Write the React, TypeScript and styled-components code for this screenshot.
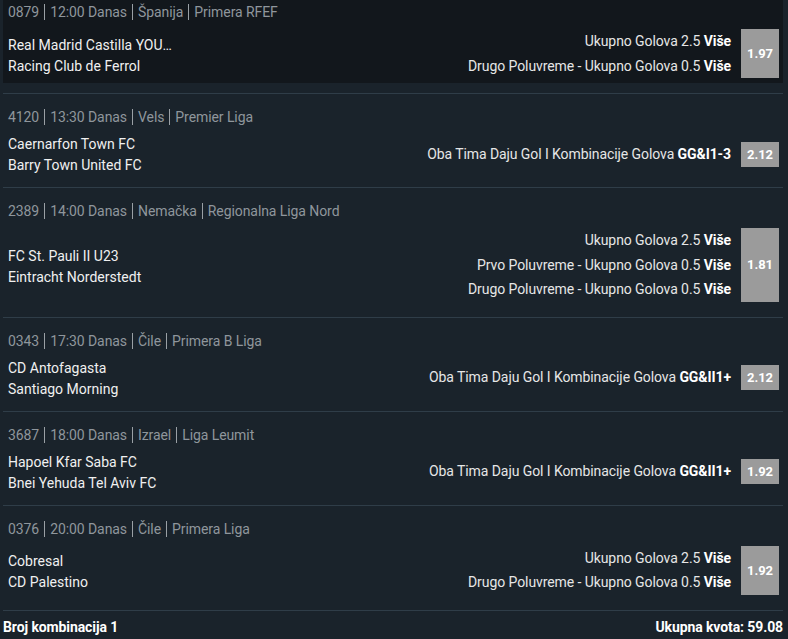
import React from "react";
import styled, { createGlobalStyle } from "styled-components";

const Global = createGlobalStyle`
  html, body { margin: 0; padding: 0; background: #1a232b; overflow: hidden; }
  body { font-family: Roboto, "Noto Sans", Arial, sans-serif; }
`;

const Page = styled.div`
  width: 788px;
  height: 639px;
  overflow: hidden;
  background: #1a232b;
`;

const List = styled.div`
  width: 780px;
  margin: -11px 0 0 3px;
  display: flex;
  flex-direction: column;
`;

const Row = styled.div<{ $active?: boolean }>`
  background: ${(p) => (p.$active ? "#12171c" : "transparent")};
  padding: 13px 4px 1px 5px;
  display: flex;
  flex-direction: column;
`;

const Divider = styled.div`
  height: 1px;
  background: #2f3d48;
  margin-top: 10px;
`;

const Meta = styled.div`
  display: flex;
  align-items: center;
  height: 20px;
  font-size: 14px;
  letter-spacing: -0.08px;
  color: #8f969c;
`;

const Sep = styled.span`
  display: inline-block;
  width: 1px;
  height: 16px;
  background: #9aa0a5;
  margin: 0 5px;
`;

const Body = styled.div`
  margin-top: 5px;
  display: flex;
  align-items: center;
  justify-content: space-between;
`;

const Teams = styled.div`
  display: flex;
  flex-direction: column;
  padding-top: 2px;
  font-size: 14px;
  line-height: 21px;
  color: #f0f0f0;
`;

const Bets = styled.div<{ $multi?: boolean }>`
  display: flex;
  align-items: center;
  gap: 10px;
  margin: ${(p) => (p.$multi ? "2px 0 4px" : "0")};
`;

const BetLines = styled.div`
  display: flex;
  flex-direction: column;
  align-items: flex-end;
  font-size: 14px;
  letter-spacing: -0.08px;
  line-height: 24.5px;
  color: #e6e6e6;
`;

const Pick = styled.b`
  font-weight: 700;
  color: #ffffff;
`;

const Odds = styled.div`
  width: 38px;
  align-self: stretch;
  min-height: 25px;
  background: #9b9b9b;
  color: #ffffff;
  font-weight: 700;
  font-size: 13px;
  display: flex;
  align-items: center;
  justify-content: center;
`;

const Footer = styled.div`
  display: flex;
  justify-content: space-between;
  padding: 8px 0 0 0;
  font-size: 14px;
  font-weight: 700;
  letter-spacing: -0.1px;
  color: #ffffff;
`;

type Bet = { label: string; pick: string };
type Match = {
  id: string;
  time: string;
  country: string;
  league: string;
  home: string;
  away: string;
  bets: Bet[];
  odds: string;
  active?: boolean;
};

const matches: Match[] = [
  {
    id: "0879",
    time: "12:00 Danas",
    country: "Španija",
    league: "Primera RFEF",
    home: "Real Madrid Castilla YOU…",
    away: "Racing Club de Ferrol",
    bets: [
      { label: "Ukupno Golova 2.5", pick: "Više" },
      { label: "Drugo Poluvreme - Ukupno Golova 0.5", pick: "Više" },
    ],
    odds: "1.97",
    active: true,
  },
  {
    id: "4120",
    time: "13:30 Danas",
    country: "Vels",
    league: "Premier Liga",
    home: "Caernarfon Town FC",
    away: "Barry Town United FC",
    bets: [{ label: "Oba Tima Daju Gol I Kombinacije Golova", pick: "GG&I1-3" }],
    odds: "2.12",
  },
  {
    id: "2389",
    time: "14:00 Danas",
    country: "Nemačka",
    league: "Regionalna Liga Nord",
    home: "FC St. Pauli II U23",
    away: "Eintracht Norderstedt",
    bets: [
      { label: "Ukupno Golova 2.5", pick: "Više" },
      { label: "Prvo Poluvreme - Ukupno Golova 0.5", pick: "Više" },
      { label: "Drugo Poluvreme - Ukupno Golova 0.5", pick: "Više" },
    ],
    odds: "1.81",
  },
  {
    id: "0343",
    time: "17:30 Danas",
    country: "Čile",
    league: "Primera B Liga",
    home: "CD Antofagasta",
    away: "Santiago Morning",
    bets: [{ label: "Oba Tima Daju Gol I Kombinacije Golova", pick: "GG&II1+" }],
    odds: "2.12",
  },
  {
    id: "3687",
    time: "18:00 Danas",
    country: "Izrael",
    league: "Liga Leumit",
    home: "Hapoel Kfar Saba FC",
    away: "Bnei Yehuda Tel Aviv FC",
    bets: [{ label: "Oba Tima Daju Gol I Kombinacije Golova", pick: "GG&II1+" }],
    odds: "1.92",
  },
  {
    id: "0376",
    time: "20:00 Danas",
    country: "Čile",
    league: "Primera Liga",
    home: "Cobresal",
    away: "CD Palestino",
    bets: [
      { label: "Ukupno Golova 2.5", pick: "Više" },
      { label: "Drugo Poluvreme - Ukupno Golova 0.5", pick: "Više" },
    ],
    odds: "1.92",
  },
];

export default function App() {
  return (
    <Page>
      <Global />
      <List>
        {matches.map((m) => (
          <React.Fragment key={m.id}>
            <Row $active={m.active}>
              <Meta>
                {m.id}
                <Sep />
                {m.time}
                <Sep />
                {m.country}
                <Sep />
                {m.league}
              </Meta>
              <Body>
                <Teams>
                  <span>{m.home}</span>
                  <span>{m.away}</span>
                </Teams>
                <Bets $multi={m.bets.length > 1}>
                  <BetLines>
                    {m.bets.map((b, i) => (
                      <span key={i}>
                        {b.label} <Pick>{b.pick}</Pick>
                      </span>
                    ))}
                  </BetLines>
                  <Odds>{m.odds}</Odds>
                </Bets>
              </Body>
            </Row>
            <Divider />
          </React.Fragment>
        ))}
        <Footer>
          <span>Broj kombinacija 1</span>
          <span>Ukupna kvota: 59.08</span>
        </Footer>
      </List>
    </Page>
  );
}
